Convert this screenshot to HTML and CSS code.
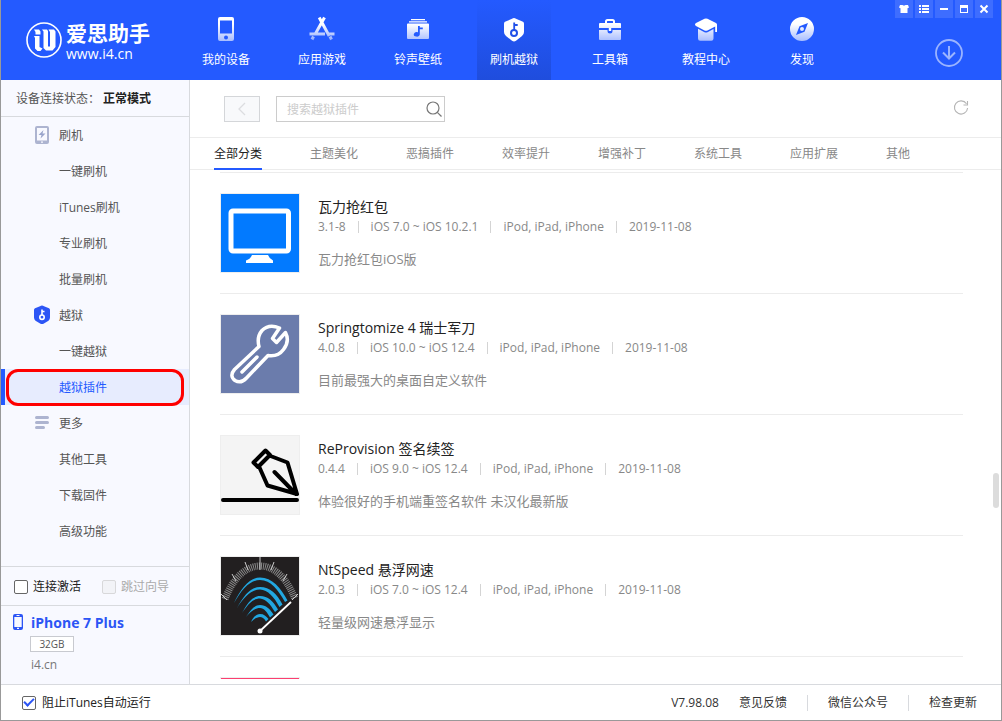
FILE: index.html
```html
<!DOCTYPE html>
<html lang="zh-CN">
<head>
<meta charset="utf-8">
<title>爱思助手</title>
<link rel="stylesheet" href="styles.css">
</head>
<body>
<div class="window">
  <header class="header">
    <div class="brand">
      <svg class="brand-mark" width="38" height="38" viewBox="0 0 38 38">
        <circle cx="19" cy="19" r="17" fill="none" stroke="#fff" stroke-width="1.6"/>
        <path d="M9 8.500h5l1.500 2v3h-5V11zM9 15h5.500v11l3 1.500-2 2.500h-3L10 27.500V17zM17 8.500h5l1 1.500v15.500h2V11l-1.500-2.500h5.500l1.500 2V26l-3 3.500h-6.500L18.500 27V10.500z" fill="#fff"/>
      </svg>
      <div class="brand-text">
        <div class="brand-name">爱思助手</div>
        <div class="brand-url">www.i4.cn</div>
      </div>
    </div>
    <nav class="nav">
      <a class="nav-item" href="#">
        <svg width="26" height="26" viewBox="0 0 26 26"><path fill="url(#fade)" fill-rule="evenodd" d="M7 1h12a2 2 0 0 1 2 2v20a2 2 0 0 1-2 2H7a2 2 0 0 1-2-2V3a2 2 0 0 1 2-2zm0 3.500v13h12v-13zM13 19.500a2 2 0 1 0 0 4 2 2 0 0 0 0-4z"/></svg>
        <span>我的设备</span>
      </a>
      <a class="nav-item" href="#">
        <svg width="26" height="26" viewBox="0 0 26 26" fill="none" stroke="url(#fadeline)" stroke-width="3" stroke-linecap="butt"><path d="M10.200 1.500l10 18.500M15.500 1.500L6 18.500M.5 18h15.500M19.500 18h6M4.500 20.500L3 23.500M21 20.500l1.500 3"/></svg>
        <span>应用游戏</span>
      </a>
      <a class="nav-item" href="#">
        <svg width="26" height="26" viewBox="0 0 26 26"><path fill="#fff" d="M6 3h14v1.200H6zM4 5.200h18v1.200H4z"/><path fill="url(#fade)" fill-rule="evenodd" d="M3 7.500h20q1 0 1 1V22q0 1-1 1H3q-1 0-1-1V8.500q0-1 1-1zM13 10v6.200a3 2.300 0 1 0 1.800 2.300v-5.300h3V11.500h-3V10z"/></svg>
        <span>铃声壁纸</span>
      </a>
      <a class="nav-item active" href="#" aria-current="page">
        <svg width="26" height="26" viewBox="0 0 26 26"><path fill="#fff" d="M13 2q1 0 2 .8l7 3q1 .7 1 2v8.200q0 2.500-2 4l-6 4.800q-2 1.400-4 0l-6-4.800q-2-1.500-2-4V7.800q0-1.300 1-2l7-3q1-.8 2-.8z"/><path d="M13.200 6.500v8M13.200 9h3.500" stroke="#2050e8" stroke-width="1.800" fill="none"/><circle cx="13" cy="17" r="3" fill="none" stroke="#2050e8" stroke-width="2"/></svg>
        <span>刷机越狱</span>
      </a>
      <a class="nav-item" href="#">
        <svg width="26" height="26" viewBox="0 0 26 26"><path d="M9 8V5.500q0-1.500 1.500-1.500h5q1.500 0 1.500 1.500V8" fill="none" stroke="#fff" stroke-width="2"/><path fill="url(#fade)" d="M3 7h20q1 0 1 1v4H2V8q0-1 1-1zM2 14h8.500v1q0 2.500 2.500 2.500t2.500-2.500v-1H24v9q0 1-1 1H3q-1 0-1-1z"/><path d="M11.800 12h2.400v3h-2.400z" fill="#fff"/></svg>
        <span>工具箱</span>
      </a>
      <a class="nav-item" href="#">
        <svg width="26" height="26" viewBox="0 0 26 26"><path fill="#fff" d="M11.500 2.800q1.500-.6 3 0L23 7q1 .6 1 1.500V16h-1.800v-5.500l-7.700 4q-1.500.7-3 0L3 10q-2-1.300 0-3z"/><path fill="url(#fade)" d="M5 12.800l6.500 3.400q1.500.7 3 0l6-3.200v9.500q0 2.200-2.200 2.200H7.200Q5 24.700 5 22.500z"/></svg>
        <span>教程中心</span>
      </a>
      <a class="nav-item" href="#">
        <svg width="26" height="26" viewBox="0 0 26 26"><path fill="url(#fade)" fill-rule="evenodd" d="M13 1a12 12 0 1 1 0 24 12 12 0 0 1 0-24zm6 6l-8.500 3.200L7 19l8.500-3.200zM13 11a2 2 0 1 1 0 4 2 2 0 0 1 0-4z"/></svg>
        <span>发现</span>
      </a>
    </nav>
    <div class="header-side">
      <div class="window-buttons">
        <button class="win-btn" aria-label="皮肤"><svg width="10" height="10" viewBox="0 0 10 10"><path fill="#fff" d="M1 1h2.500q1.500 1.200 3 0H9l1 2.500-1.500.7V9h-7V4.200L0 3.500z"/></svg></button>
        <button class="win-btn" aria-label="菜单"><svg width="10" height="10" viewBox="0 0 10 10"><path fill="#fff" d="M0 1h2v2H0zM3 1h7v2H3zM0 4h2v2H0zM3 4h7v2H3zM0 7h2v2H0zM3 7h7v2H3z"/></svg></button>
        <button class="win-btn" aria-label="最小化"><svg width="10" height="10" viewBox="0 0 10 10"><path fill="#fff" d="M1 4h8v2H1z"/></svg></button>
        <button class="win-btn" aria-label="最大化"><svg width="10" height="10" viewBox="0 0 10 10"><path fill="#fff" fill-rule="evenodd" d="M1 1h8v8H1zm1 3v4h6V4z"/></svg></button>
        <button class="win-btn" aria-label="关闭"><svg width="10" height="10" viewBox="0 0 10 10"><path stroke="#fff" stroke-width="2" d="M1.500 1.500l7 7M8.500 1.500l-7 7"/></svg></button>
      </div>
      <button class="download" aria-label="下载"><svg width="28" height="28" viewBox="0 0 28 28" fill="none" stroke="#9bb4ff" stroke-width="1.800"><circle cx="14" cy="14" r="13"/><path d="M14 7v12.500M8 13.500l6 6 6-6" stroke-width="2"/></svg></button>
    </div>
  </header>

  <div class="body">
    <aside class="sidebar">
      <div class="status">设备连接状态：<strong>正常模式</strong></div>
      <nav class="side-nav">
        <a class="side-item" href="#"><svg width="16" height="20" viewBox="0 0 16 20"><path fill="#adb4d0" fill-rule="evenodd" d="M3 1h10q2 0 2 2v14q0 2-2 2H3q-2 0-2-2V3q0-2 2-2zm0 2v12.500h10V3zM7 16.500v1.200h2v-1.200z"/><path fill="#9aa5cc" d="M9.500 5L4.500 10h3L6.500 13.500l5-5h-3z"/></svg>刷机</a>
        <a class="side-item" href="#">一键刷机</a>
        <a class="side-item" href="#">iTunes刷机</a>
        <a class="side-item" href="#">专业刷机</a>
        <a class="side-item" href="#">批量刷机</a>
        <a class="side-item" href="#"><svg width="16" height="20" viewBox="0 0 16 20"><path fill="#2c55f5" d="M8 .5q1 0 2 .7l5 2q1 .5 1 1.800v7.500q0 2-1.500 3.200l-5 3q-1.500.8-3 0l-5-3Q0 14.500 0 12.500V5q0-1.300 1-1.800l5-2q1-.7 2-.7z"/><path d="M8 4.500v6M8 6.500h2.500" stroke="#fff" stroke-width="1.600" fill="none"/><circle cx="8" cy="12.200" r="2.200" fill="none" stroke="#fff" stroke-width="1.600"/></svg>越狱</a>
        <a class="side-item" href="#">一键越狱</a>
        <a class="side-item active" href="#" aria-current="page">越狱插件</a>
        <a class="side-item" href="#"><svg width="16" height="20" viewBox="0 0 16 20"><path stroke="#adb4d0" stroke-width="3" stroke-linecap="round" d="M2.500 4.500h11M2.500 9.500h11M2.500 14.500h7"/></svg>更多</a>
        <a class="side-item" href="#">其他工具</a>
        <a class="side-item" href="#">下载固件</a>
        <a class="side-item" href="#">高级功能</a>
      </nav>
      <div class="options">
        <label class="check"><input type="checkbox">连接激活</label>
        <label class="check off"><input type="checkbox" disabled>跳过向导</label>
      </div>
      <div class="device">
        <svg class="device-icon" width="10" height="16" viewBox="0 0 10 16"><path fill="#2c55f5" fill-rule="evenodd" d="M2 0h6q2 0 2 2v12q0 2-2 2H2q-2 0-2-2V2q0-2 2-2zm-.7 3v10h7.400V3zM3.500 1v1h3V1zM4 13.800v1.200h2v-1.200z"/></svg>
        <div class="device-info">
          <div class="device-name">iPhone 7 Plus</div>
          <div class="capacity">32GB</div>
          <div class="device-note">i4.cn</div>
        </div>
      </div>
    </aside>

    <main class="main">
      <div class="toolbar">
        <button class="back" aria-label="返回" disabled><svg width="8" height="14" viewBox="0 0 8 14" fill="none" stroke="#dcdde0" stroke-width="1.300"><path d="M7 1L1 7l6 6"/></svg></button>
        <div class="search">
          <input type="text" placeholder="搜索越狱插件" aria-label="搜索越狱插件">
          <button aria-label="搜索"><svg width="16" height="16" viewBox="0 0 16 16" fill="none" stroke="#777" stroke-width="1.200"><circle cx="7" cy="7" r="6"/><path d="M11.300 11.300L15.500 15.500"/></svg></button>
        </div>
        <button class="refresh" aria-label="刷新"><svg width="16" height="16" viewBox="0 0 16 16" fill="none" stroke="#b5b5b5" stroke-width="1.100"><path d="M13.500 3.800A6.600 6.600 0 1 0 14.600 8M14.500 1v4H10.500"/></svg></button>
      </div>
      <nav class="tabs">
        <a class="tab active" href="#">全部分类</a>
        <a class="tab" href="#">主题美化</a>
        <a class="tab" href="#">恶搞插件</a>
        <a class="tab" href="#">效率提升</a>
        <a class="tab" href="#">增强补丁</a>
        <a class="tab" href="#">系统工具</a>
        <a class="tab" href="#">应用扩展</a>
        <a class="tab" href="#">其他</a>
      </nav>
      <div class="list">
        <article class="app">
          <svg class="app-icon" viewBox="0 0 78 78"><path fill="#027aff" d="M0 0h78v78H0z"/><rect x="10" y="17" width="57.500" height="40" rx="2" fill="none" stroke="#fff" stroke-width="5"/><path fill="#fff" d="M31 61h16q1.500 4 5 5.500V69H25v-2.500q4.500-1.500 6-5.500z"/></svg>
          <div class="app-text">
            <h2>瓦力抢红包</h2>
            <ul class="meta"><li>3.1-8</li><li>iOS 7.0 ~ iOS 10.2.1</li><li>iPod, iPad, iPhone</li><li>2019-11-08</li></ul>
            <p>瓦力抢红包iOS版</p>
          </div>
        </article>
        <article class="app">
          <svg class="app-icon" viewBox="0 0 78 78"><path fill="#6b7cac" d="M0 0h78v78H0z"/><path fill="none" stroke="#fff" stroke-width="3.500" stroke-linejoin="round" stroke-linecap="round" d="M58.500 13Q48 8.500 41 15.500Q35.500 22 38 31.500L13.500 54.500Q8 61 14 65.500Q20 69 25.500 63L47 40.500Q57 42 62.500 34.500Q69 26 64.500 17.500L55.500 27.500L51.500 23.500Z"/><path stroke="#fff" stroke-width="3.500" stroke-linecap="round" d="M21 57L36 42"/></svg>
          <div class="app-text">
            <h2>Springtomize 4 瑞士军刀</h2>
            <ul class="meta"><li>4.0.8</li><li>iOS 10.0 ~ iOS 12.4</li><li>iPod, iPad, iPhone</li><li>2019-11-08</li></ul>
            <p>目前最强大的桌面自定义软件</p>
          </div>
        </article>
        <article class="app">
          <svg class="app-icon" viewBox="0 0 78 78"><path fill="#f4f4f4" d="M0 0h78v78H0z"/><path fill="none" stroke="#000" stroke-width="4" stroke-linejoin="round" stroke-linecap="round" d="M32.500 26.500L44.500 14.500L49 19L37 31ZM49.500 20L66.500 26.500L76 58L46.500 49.500L38.500 31.500M53.500 36L75 58M2 64h74"/></svg>
          <div class="app-text">
            <h2>ReProvision 签名续签</h2>
            <ul class="meta"><li>0.4.4</li><li>iOS 9.0 ~ iOS 12.4</li><li>iPod, iPad, iPhone</li><li>2019-11-08</li></ul>
            <p>体验很好的手机端重签名软件 未汉化最新版</p>
          </div>
        </article>
        <article class="app">
          <svg class="app-icon" viewBox="0 0 78 78"><path fill="#221f20" d="M0 0h78v78H0z"/>
            <path fill="none" stroke="#8a8a8a" stroke-width="7" stroke-dasharray="1 1" d="M4 42C12 21 25 9 39 9S66 21 74 42"/>
            <path stroke="#ccc" stroke-width="1" d="M0 37l6 6M11 17l4 7M24 5l3 8M39 0v13M53 5l-3 8M66 17l-4 7M77 37l-6 6"/>
            <g fill="#22a7e0"><path d="M13 46C20 31 29 20.500 39 20.500C51 20.500 60 31 66.500 43.500L64 45C57 33 50 23 39 23C29 23 21 32 13 46z"/><path d="M16 51C23 38 30 30 39 30C49 30 56 37 61.500 47.500L58.500 50C53 40 47 33 39 32.500C31 32.500 23 40 16 51z"/><path d="M21 56C27 45 32 39 39 39C47 39 52 44 57 52.500L54 55C49 47 45 42 39 41.500C32 41.500 27 47 21 56z"/><path d="M25 60C30 52 34 48 39 48C45 48 49 52 52.500 57.500L49 60.500C46 55 43 51 39 51C34 51 30 54 25 60z"/><path d="M30 65C33 59 36 57 39 57C43 57 45 59 47.500 62L45 64.500C43 61 41 60 39 60C36 60 33 62 30 65z"/></g>
            <path stroke="#fff" stroke-width="1.800" d="M39 74L70 45"/><circle cx="39" cy="74" r="2.500" fill="#fff"/></svg>
          <div class="app-text">
            <h2>NtSpeed 悬浮网速</h2>
            <ul class="meta"><li>2.0.3</li><li>iOS 7.0 ~ iOS 12.4</li><li>iPod, iPad, iPhone</li><li>2019-11-08</li></ul>
            <p>轻量级网速悬浮显示</p>
          </div>
        </article>
        <article class="app">
          <svg class="app-icon" viewBox="0 0 78 78"><path fill="#fb3f70" d="M0 0h78v78H0z"/></svg>
        </article>
      </div>
      <div class="scroll-thumb"></div>
    </main>
  </div>

  <footer class="footer">
    <label class="check"><input type="checkbox" checked>阻止iTunes自动运行</label>
    <div class="footer-links">
      <span class="version">V7.98.08</span>
      <a href="#">意见反馈</a>
      <a href="#">微信公众号</a>
      <a href="#">检查更新</a>
    </div>
  </footer>
</div>
<svg class="defs" width="0" height="0" aria-hidden="true">
  <linearGradient id="fade" gradientUnits="userSpaceOnUse" x1="0" y1="8" x2="0" y2="26"><stop offset="0" stop-color="#fff"/><stop offset="1" stop-color="#a3b9ff"/></linearGradient>
  <linearGradient id="fadeline" gradientUnits="userSpaceOnUse" x1="0" y1="8" x2="0" y2="26"><stop offset="0" stop-color="#fff"/><stop offset="1" stop-color="#86a3ff"/></linearGradient>
</svg>
</body>
</html>
```
FILE: styles.css
```css
* { box-sizing: border-box; }
body {
  margin: 0;
  font: 12px/20px "Open Sans", "Noto Sans CJK SC", sans-serif;
  color: #333;
}
a { color: inherit; text-decoration: none; }
button { padding: 0; border: 0; background: none; display: grid; place-items: center; }
svg { display: block; flex: none; }
.defs { position: absolute; }

.window {
  display: flex;
  flex-direction: column;
  height: 100vh;
  border: solid #999;
  border-width: 0 1px 1px;
  background: #fff;
}

.header { display: flex; height: 80px; background: #245aff; color: #fff; }
.brand { width: 188px; padding-left: 24px; display: flex; align-items: center; gap: 3px; }
.brand-text { padding-top: 2px; }
.brand-name { font-size: 21px; line-height: 25px; font-weight: 700; }
.brand-url { font-size: 14px; line-height: 16px; }
.nav { display: flex; gap: 22px; }
.nav-item {
  width: 74px;
  padding-top: 16px;
  display: flex;
  flex-direction: column;
  align-items: center;
  gap: 8px;
}
.nav-item.active { background: linear-gradient(#245aff, #1f4ddd); }
.header-side { margin-left: auto; display: flex; flex-direction: column; align-items: flex-end; }
.window-buttons { display: flex; gap: 2px; padding-right: 8px; }
.win-btn { width: 18px; height: 18px; background: #3e6dff; }
.download { margin: 21px 38px 0 0; }

.body { flex: 1; min-height: 0; display: flex; }
.sidebar {
  width: 189px;
  flex: none;
  display: flex;
  flex-direction: column;
  background: #f8f9ff;
  border-right: 1px solid #d8dade;
  color: #555;
}
.status { height: 37px; padding: 9px 15px 7px; border-bottom: 1px solid #d8dade; }
.status strong { color: #222; margin-left: 3px; }
.side-nav { flex: 1; display: flex; flex-direction: column; }
.side-item {
  height: 36px;
  padding: 2px 0 0 58px;
  display: flex;
  align-items: center;
  position: relative;
}
.side-item svg { margin: 0 9px 2px -25px; }
.side-item.active { background: #e7ecfe; border-left: 4px solid #245aff; padding-left: 54px; color: #245aff; }
.side-item.active::after {
  content: "";
  position: absolute;
  inset: 0 5px -1px 1px;
  border: 3px solid #ff0000;
  border-radius: 12px;
}
.check { display: flex; align-items: center; gap: 5px; color: #222; }
.check input {
  appearance: none;
  width: 14px;
  height: 14px;
  margin: 0;
  border: 1px solid #666;
  border-radius: 2px;
  background: #fff;
}
.check input:checked { display: grid; place-items: center; }
.check input:checked::before {
  content: "";
  width: 8px;
  height: 4px;
  border: solid #2c55f5;
  border-width: 0 0 2px 2px;
  transform: rotate(-45deg);
  margin-bottom: 3px;
}
.check.off { color: #aaa; }
.check.off input { border-color: #d8d8da; background: #f2f3f7; }
.options {
  height: 40px;
  padding: 1px 0 0 13px;
  display: flex;
  gap: 21px;
  border: solid #d8dade;
  border-width: 1px 0;
}
.device { height: 78px; padding: 7px 0 0 12px; display: flex; gap: 8px; }
.device-icon { margin-top: 1px; }
.device-name { font-size: 14px; font-weight: 700; color: #2c55f5; }
.capacity {
  width: 44px;
  height: 16px;
  margin: 3px 0 4px -1px;
  border: 1px solid #c8cad0;
  background: #fff;
  font-size: 10px;
  line-height: 14px;
  text-align: center;
}
.device-note { color: #777; line-height: 18px; }

.main { flex: 1; min-width: 0; display: flex; flex-direction: column; position: relative; }
.toolbar {
  height: 58px;
  padding: 0 32px 0 34px;
  display: flex;
  align-items: center;
  border-bottom: 1px solid #ececec;
}
.back { width: 36px; height: 26px; border: 1px solid #d4d6d9; background: #f8f9fb; }
.search { width: 169px; height: 26px; margin-left: 16px; display: flex; align-items: center; border: 1px solid #ccc; }
.search input { flex: 1; min-width: 0; border: 0; outline: 0; padding: 2px 0 0 10px; font: inherit; }
.search input::placeholder { color: #ccc; opacity: 1; }
.search button { padding-right: 2px; }
.refresh { margin: 0 0 2px auto; }
.tabs { height: 32px; padding-left: 24px; display: flex; gap: 48px; border-bottom: 1px solid #ececec; color: #888; }
.tab { padding-top: 6px; }
.tab.active { color: #222; height: 32px; border-bottom: 2px solid #245aff; }

.list { flex: 1; min-height: 0; overflow: hidden; margin: 2px 38px 5px 30px; }
.app { height: 121px; padding: 20px 0; border-top: 1px solid #ececec; display: flex; gap: 18px; }
.app-icon { width: 80px; height: 80px; border: 1px solid #eee; }
.app-text { padding-top: 4px; color: #888; font-size: 13px; }
.app h2 { margin: 0; font-size: 14px; line-height: 20px; font-weight: 400; color: #222; }
.meta {
  margin: 0;
  padding: 0;
  list-style: none;
  display: flex;
  align-items: center;
  font-size: 12px;
}
.meta li + li { display: flex; align-items: center; }
.meta li + li::before { content: ""; width: 1px; height: 12px; margin: 0 12px; background: #d4d4d4; }
.app p { margin: 12px 0 0; }
.scroll-thumb {
  position: absolute;
  right: 2px;
  top: 65%;
  width: 6px;
  height: 35px;
  border-radius: 3px;
  background: #dcdcdc;
}

.footer {
  height: 36px;
  padding: 0 24px 0 21px;
  display: flex;
  align-items: center;
  justify-content: space-between;
  border-top: 1px solid #d8dade;
}
.footer .check { gap: 6px; }
.footer-links { display: flex; align-items: center; }
.footer-links a { display: flex; align-items: center; }
.version { margin-right: 20px; }
.footer-links a + a::before { content: ""; width: 1px; height: 16px; margin: 0 20px; background: #d8dade; }
```
